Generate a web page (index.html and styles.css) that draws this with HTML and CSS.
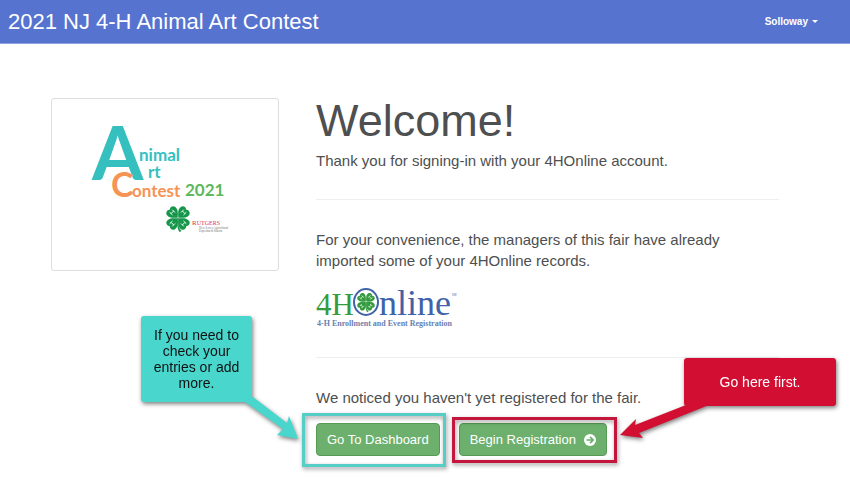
FILE: index.html
```html
<!DOCTYPE html>
<html lang="en">
<head>
    <meta charset="UTF-8">
    <meta name="viewport" content="width=device-width, initial-scale=1.0">
    <title>2021 NJ 4-H Animal Art Contest</title>
    <link rel="stylesheet" href="styles.css">
</head>
<body>
    <svg class="sprite" aria-hidden="true">
        <symbol id="leaf" viewBox="-14 -14 28 28" overflow="visible">
            <path d="M0 -.5C-3 -3 -6.500 -6 -5.800 -10C-5 -13 -1.500 -13.500 0 -11.500C1.500 -13.500 5 -13 5.800 -10C6.500 -6 3 -3 0 -.5Z" fill="currentColor"/>
            <path d="M-1.800 -10V-6M1.800 -10V-6M-1.800 -8H1.800" fill="none" stroke="#fff" stroke-width=".9"/>
        </symbol>
        <symbol id="clover" viewBox="-12 -12 24 26">
            <g transform="rotate(-45)"><use href="#leaf" x="-14" y="-14" width="28" height="28"/></g>
            <g transform="rotate(45)"><use href="#leaf" x="-14" y="-14" width="28" height="28"/></g>
            <g transform="rotate(135)"><use href="#leaf" x="-14" y="-14" width="28" height="28"/></g>
            <g transform="rotate(225)"><use href="#leaf" x="-14" y="-14" width="28" height="28"/></g>
            <path d="M-.5 0H.5C0 6 .5 10 3.500 13L1.500 14C-1 10 -1 6 -.5 0Z" fill="currentColor"/>
        </symbol>
    </svg>

    <header class="navbar">
        <a class="brand" href="#">2021 NJ 4-H Animal Art Contest</a>
        <button class="user-menu" type="button" aria-haspopup="true">Solloway <span class="caret"></span></button>
    </header>

    <main class="page">
        <div class="thumbnail">
            <svg class="fair-logo" viewBox="0 0 218 163" role="img" aria-label="Animal Art Contest 2021">
                <g class="fair-name">
                    <text class="teal" x="36" y="77" font-size="74">A</text>
                    <text class="teal" x="83" y="58" font-size="17">nimal</text>
                    <text class="teal" x="92" y="75" font-size="17">rt</text>
                    <text class="orange" x="55" y="94" font-size="34">C</text>
                    <text class="orange" x="76" y="94" font-size="17">ontest</text>
                    <text class="green" x="129" y="93" font-size="17">2021</text>
                </g>
                <use class="clover" href="#clover" x="110" y="103" width="24" height="26"/>
                <text class="rutgers" x="136" y="122" font-size="7">R<tspan font-size="6">UTGERS</tspan></text>
                <text class="station" x="143" y="126" font-size="3">New Jersey Agricultural</text>
                <text class="station" x="143" y="129" font-size="3">Experiment Station</text>
            </svg>
        </div>

        <div class="content">
            <h1>Welcome!</h1>
            <p>Thank you for signing-in with your 4HOnline account.</p>
            <hr>
            <p>For your convenience, the managers of this fair have already imported some of your 4HOnline records.</p>
            <svg class="online-logo" width="144" height="42" viewBox="0 0 144 42" role="img" aria-label="4HOnline">
                <text class="online-green" x="0" y="28" font-size="31">4H</text>
                <ellipse cx="50" cy="15" rx="12" ry="13" fill="none" stroke="#3f62a8" stroke-width="2"/>
                <use class="clover-light" href="#clover" x="41" y="5" width="18" height="21"/>
                <text class="online-blue" x="63" y="28" font-size="36">nline</text>
                <text class="online-blue" x="136" y="9" font-size="3">SM</text>
                <text class="tagline" x="1" y="39" font-size="8">4-H Enrollment and Event Registration</text>
            </svg>
            <hr>
            <p>We noticed you haven't yet registered for the fair.</p>
            <div class="actions">
                <div class="action action-dashboard">
                    <button class="btn" type="button">Go To Dashboard</button>
                </div>
                <div class="action action-register">
                    <button class="btn" type="button">Begin Registration
                        <svg class="icon" width="12" height="12" viewBox="0 0 12 12" aria-hidden="true">
                            <circle cx="6" cy="6" r="6" fill="#fff"/>
                            <path d="M2.500 6H9M6 2.800L9.200 6L6 9.200" fill="none" stroke="#6db06d" stroke-width="1.700"/>
                        </svg>
                    </button>
                </div>
            </div>
        </div>

        <!-- help callouts -->
        <div class="callout callout-teal">
            If you need to check your entries or add more.
            <svg class="arrow" width="54" height="46" viewBox="0 0 54 46" aria-hidden="true">
                <path d="M0 5L8 0L42 26L44 19L53 42L32 38L38 32Z" fill="#48d6cd"/>
            </svg>
        </div>
        <div class="callout callout-red">
            Go here first.
            <svg class="arrow" width="90" height="36" viewBox="0 0 90 36" aria-hidden="true">
                <path d="M66 2L15 22L16 16L0 32L23 35L19 30L89 2Z" fill="#d20f32"/>
            </svg>
        </div>
    </main>
</body>
</html>
```

FILE: styles.css
```css
* {
    box-sizing: border-box;
}
body {
    margin: 0;
    font-family: "Liberation Sans", Arial, sans-serif;
    font-size: 15px;
    line-height: 21px;
    color: #4d4f50;
    background-color: #fff;
}
.sprite {
    position: absolute;
    width: 0;
    height: 0;
}

/* top bar */
.navbar {
    display: flex;
    justify-content: space-between;
    align-items: center;
    height: 44px;
    padding: 0 32px 0 8px;
    background-color: #5673d0;
    border-bottom: 1px solid #8fa2e0;
}
.brand {
    color: #fff;
    font-size: 22px;
    text-decoration: none;
}
.user-menu {
    display: flex;
    align-items: center;
    gap: 4px;
    padding: 0;
    border: none;
    background: none;
    color: #fff;
    font: bold 10px "Liberation Sans", Arial, sans-serif;
    cursor: pointer;
}
.caret {
    border-top: 3px solid #fff;
    border-left: 3px solid transparent;
    border-right: 3px solid transparent;
}

/* page */
.page {
    position: relative;
    display: grid;
    grid-template-columns: 228px 1fr;
    gap: 37px;
    align-items: start;
    padding: 54px 71px 32px 51px;
}
.thumbnail {
    padding: 4px;
    border: 1px solid #ddd;
    border-radius: 3px;
}
.fair-logo {
    display: block;
    width: 100%;
}
.fair-name {
    font-family: Lato, sans-serif;
    font-weight: bold;
}
.teal {
    fill: #35c0bf;
}
.orange {
    fill: #f59455;
}
.green {
    fill: #5cb85c;
}
.clover {
    color: #15964a;
}
.rutgers {
    font-family: "Liberation Serif", serif;
    fill: #e0304e;
}
.station {
    font-family: "Liberation Serif", serif;
    fill: #777;
}
h1 {
    margin: 0 0 6px;
    font-size: 45px;
    font-weight: normal;
    line-height: 46px;
}
p {
    margin: 0;
}
hr {
    margin: 28px 0 29px;
    border: none;
    border-top: 1px solid #eee;
}
.online-logo {
    display: block;
    margin-top: 16px;
    overflow: visible;
    font-family: "Liberation Serif", serif;
}
.online-green {
    fill: #349b3e;
}
.online-blue {
    fill: #3f62a8;
}
.clover-light {
    color: #349b3e;
}
.tagline {
    font-weight: bold;
    fill: #6b7fae;
}

/* buttons with their highlight frames */
.actions {
    display: flex;
    gap: 19px;
    margin-top: 15px;
}
.action {
    position: relative;
}
.action::after {
    content: "";
    position: absolute;
    border: 3px solid;
    filter: drop-shadow(1px 2px 2px rgba(0, 0, 0, 0.4));
    pointer-events: none;
}
.action-dashboard::after {
    inset: -10px -6px -11px -14px;
    border-color: #56cdc6;
}
.action-register::after {
    inset: -6px -10px -7px -7px;
    border-color: #c4163c;
}
.btn {
    display: flex;
    align-items: center;
    gap: 8px;
    height: 33px;
    padding: 0 10px;
    border: 1px solid #559a55;
    border-radius: 4px;
    background-color: #6db06d;
    color: #fff;
    font: 13px "Liberation Sans", Arial, sans-serif;
    cursor: pointer;
}

/* callouts */
.callout {
    position: absolute;
    display: flex;
    align-items: center;
    justify-content: center;
    text-align: center;
    border-radius: 3px;
    line-height: 16px;
    filter: drop-shadow(1px 2px 2px rgba(0, 0, 0, 0.5));
}
.callout-teal {
    left: 141px;
    top: 272px;
    width: 111px;
    height: 86px;
    padding: 0 10px;
    background-color: #48d6cd;
    color: #111;
    font-size: 14px;
}
.callout-red {
    left: 684px;
    top: 314px;
    width: 152px;
    height: 48px;
    background-color: #d20f32;
    color: #fff;
    font-size: 14px;
}
.arrow {
    position: absolute;
}
.callout-teal .arrow {
    left: 104px;
    top: 81px;
}
.callout-red .arrow {
    right: 126px;
    top: 45px;
}
```
